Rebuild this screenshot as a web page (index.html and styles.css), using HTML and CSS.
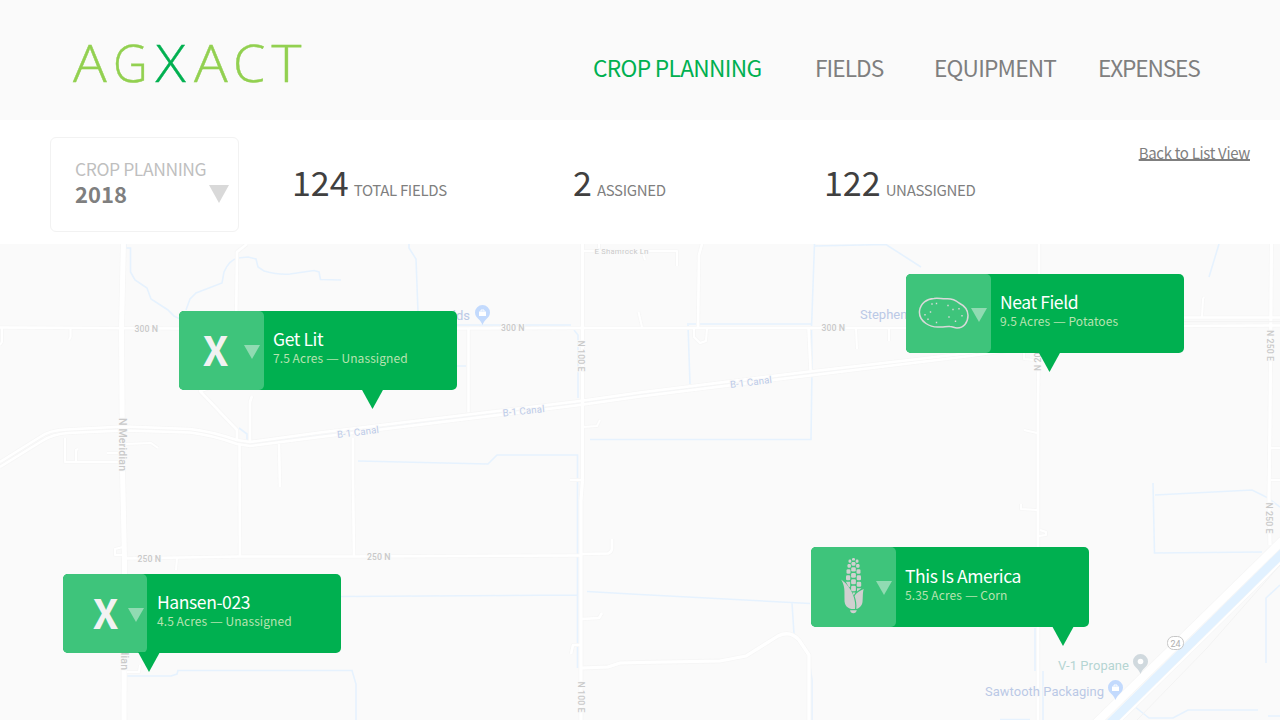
FILE: index.html
```html
<!DOCTYPE html>
<html lang="en">
<head>
<meta charset="utf-8">
<title>AGXACT – Crop Planning</title>
<link rel="stylesheet" href="styles.css">
</head>
<body>
<header class="header">
  <svg class="logo" viewBox="0 0 240 80" role="img" aria-label="AGXACT">
    <g class="logo-text">
      <text transform="translate(3 57) scale(1.1 1)">A</text>
      <text transform="translate(43 57) scale(.94 1)">G</text>
      <text class="logo-x" transform="translate(85.500 57) scale(1.1 1)">X</text>
      <text transform="translate(124 57) scale(1.1 1)">A</text>
      <text transform="translate(163 57) scale(1.02 1)">C</text>
      <text transform="translate(201.500 57) scale(1.12 1)">T</text>
    </g>
  </svg>
  <nav class="nav">
    <a class="nav-item nav-item-active nav-planning">CROP PLANNING</a>
    <a class="nav-item nav-fields">FIELDS</a>
    <a class="nav-item nav-equipment">EQUIPMENT</a>
    <a class="nav-item nav-expenses">EXPENSES</a>
  </nav>
</header>

<section class="summary">
  <div class="season">
    <div class="season-text">
      <span class="season-label">CROP PLANNING</span>
      <span class="season-year">2018</span>
    </div>
    <span class="season-arrow"></span>
  </div>
  <div class="stats">
    <div class="stat stat-total"><span class="stat-number">124</span><span class="stat-label">TOTAL FIELDS</span></div>
    <div class="stat stat-assigned"><span class="stat-number">2</span><span class="stat-label">ASSIGNED</span></div>
    <div class="stat stat-unassigned"><span class="stat-number">122</span><span class="stat-label">UNASSIGNED</span></div>
  </div>
  <a class="list-link">Back to List View</a>
</section>

<main class="map">
  <svg class="map-canvas" viewBox="0 244 1280 476">
    <defs>
      <g id="roads">
        <path class="w5" d="M123.500 240L121.500 328L122.500 470L124.500 560L124 725"/>
        <path class="w3" d="M582.500 240V480L581 500V725"/>
        <path class="w2" d="M1039 240V330L1038 400V725"/>
        <path class="w3" d="M1271.500 240L1270 420L1269 500L1270 545"/>
        <path class="w2" d="M0 327.500L180 328.500H460L580 328H910"/>
        <path class="w2" d="M124 558.500L240 556.500L350 556.500L582 555.500"/>
        <path class="w2" d="M0 462L40 437Q50 430 66 429.500L124 426.500L190 429Q210 431 237 440L250 442L320 432.500L580 401L640 392.500L810 371.500L970 353L1184 317.500H1280"/>
        <path class="w2" d="M0 467L42 441Q53 434 68 433L124 430.500L190 432.500Q212 435 237 444L250 446L320 437L580 405L640 396.500L810 375.500L970 356L1184 326L1280 325.500"/>
        <path class="w2" d="M247 244L237 252L236 328V380L200 391L237 430V441"/>
        <path class="w2" d="M252 396L250 402V441M239.500 444L240 556M279 444L280 487M353 438V480L354 556"/>
        <path class="w2" d="M468.500 328V412"/>
        <path class="w1" d="M2 328V342L0 345M70.500 328V337L69 340M65 438V462H122M76 461V450L78 449M107 453H119M125 444L151 443L158 448M177 558L176 570M123 547L115 549V555H122M127 672H139L140 665"/>
        <path class="w1" d="M583 251H677V266M599 244V251M642 250L645 260M638.500 312L642 327M583 427L597 426L600 420M570 480H582"/>
        <path class="w2" d="M702 244L699 255L698 328"/>
        <path class="w1" d="M694 328V337L700 343L706 341L707 328M856 328L857 349M889 328V341M1202 317L1203 299L1204 297M1024 353V359L1036 360M1024 430L1037 433"/>
        <path class="w2" d="M808.500 328L810.500 370"/>
        <path class="w2" d="M582 554L608 553.500Q612 552 612 548V539M582 619L599 618L602 613M582 645L573 645L571 654"/>
        <path class="w3" d="M582 668L608 667L620 663L640 662.500L720 661L746 656L778 636Q790 630 799 640L809 655V720"/>
        <path class="w1" d="M1021 504V509L1037 510M1040 530L1046 532V535L1039 536M1271 448H1280M1271 480H1280"/>
        <path class="w8" d="M1285 538L1094 725"/>
        <path class="w1" d="M1285 558.500L1116 725"/>
      </g>
      <g id="pin">
        <path d="M0 12C-2 6-7.500 5-7.500-.5A7.500 7.500 0 0 1 7.500-.5C7.500 5 2 6 0 12Z"/>
      </g>
    </defs>
    <g class="water">
      <path d="M126 244V248H130.500V272L135 280L147 288L151 299L168 310L174 316L180 319"/>
      <path d="M186 310L190 299L196 293L222 283L224 272Q229 260 238 258L248 257L256 259L258 267L264 271Q279 275 290 274L314 270.500L319 272L320.500 279.500L341 280"/>
      <path d="M239 428L247 434V440M409 244V248L416 259L418 312M457 325H571M574 330L578 335V398M457 366H466"/>
      <path d="M358 461L488 464L497 455H577.500V478M590 439.500H811L812 370L811.500 328L814.500 244M814.500 246L886 244.500L921 267M688 325L690 384M687 324H811"/>
      <path d="M577.500 482V668M341 596.500L577 595M587 591.500L640 594.500L810 603.500M792 603L794 634L808 652L812 680V720"/>
      <path d="M127 676H171L177 674L178 670.500H352L356 684V720"/>
      <path d="M1219 244L1209 277M1153 483L1154.500 553L1262 552M1155 495L1252 490L1268 498L1280 507M1280 585L1266 598V663M1035 628V671M1043 671V720M1134 706L1149 718H1173L1188 710H1258M1000 719.500H1030M1268 716H1280"/>
    </g>
    <path class="canal" d="M250 444L580 403L640 394.500L810 373.500L970 354.500"/>
    <use href="#roads" class="road-casing"/>
    <use href="#roads" class="road-fill"/>
    <path class="river" d="M1285 550.500L1108 725"/>
    <path class="rail" d="M1280 565L1207 648L1137 720M1184 321.700H1280"/>

    <g class="road-label">
      <text x="134.500" y="331.500" textLength="23.500">300 N</text>
      <text x="501" y="330.500" textLength="23.500">300 N</text>
      <text x="821.500" y="330.500" textLength="23.500">300 N</text>
      <text x="137.500" y="561.500" textLength="23.500">250 N</text>
      <text x="367" y="559.500" textLength="23.500">250 N</text>
      <text x="594.500" y="253.500" class="lane-label" textLength="54">E Shamrock Ln</text>
      <text transform="translate(119 418) rotate(90)" class="main-label" textLength="53">N Meridian</text>
      <text transform="translate(120.500 617) rotate(90)" class="main-label" textLength="53">N Meridian</text>
      <text transform="translate(578.300 340.500) rotate(90)" textLength="31">N 100 E</text>
      <text transform="translate(578.300 681.500) rotate(90)" textLength="31">N 100 E</text>
      <text transform="translate(1267 330) rotate(90)" textLength="31">N 250 E</text>
      <text transform="translate(1265.500 502.500) rotate(90)" textLength="31">N 250 E</text>
      <text transform="translate(1041 371) rotate(-90)" textLength="31">N 200 E</text>
    </g>
    <g class="canal-label">
      <text transform="translate(337.500 438) rotate(-7)" textLength="42">B-1 Canal</text>
      <text transform="translate(503 416.500) rotate(-6)" textLength="42">B-1 Canal</text>
      <text transform="translate(730.500 388) rotate(-7)" textLength="42">B-1 Canal</text>
    </g>
    <g class="place-label">
      <text x="470" y="319.500" text-anchor="end">Fields</text>
      <text x="860" y="318.500">Stephens</text>
      <text x="985" y="696" textLength="119">Sawtooth Packaging</text>
      <text x="1058" y="669.500" class="propane-label" textLength="71">V-1 Propane</text>
    </g>
    <g class="shop-pin">
      <use href="#pin" x="482.500" y="313"/>
      <use href="#pin" x="1115.500" y="688"/>
    </g>
    <g class="bag">
      <path d="M479 311.500h7v4.500h-7zM1112 686.500h7v4.500h-7z"/>
      <path class="bag-handle" d="M481 311.500v-1.500h3v1.500M1114 686.500v-1.500h3v1.500"/>
    </g>
    <g class="plain-pin"><use href="#pin" x="1140.500" y="662"/></g>
    <circle class="pin-hole" cx="1140.500" cy="661.500" r="2.800"/>
    <rect class="shield" x="1167.500" y="636.500" width="16" height="13" rx="6"/>
    <text class="shield-text" x="1175.500" y="646.500" text-anchor="middle">24</text>
  </svg>

  <article class="field field-get-lit">
    <div class="crop"><span class="crop-none">X</span><span class="crop-arrow"></span></div>
    <div class="field-body"><h2 class="field-name">Get Lit</h2><p class="field-info">7.5 Acres <span class="dash">—</span> Unassigned</p></div>
    <span class="pointer"></span>
  </article>

  <article class="field field-neat">
    <div class="crop">
      <svg class="potato" viewBox="0 0 52 34">
        <path class="potato-skin" d="M16 1.500C21 .8 24 2.200 29 1.800C34 1.700 38 3.500 41 6C46 8.500 50 12.500 50 18.500C50 25 46 31 39 31C36 31 35 29.500 32 29.500C28 29 26 30.300 22 29.900C17 30.300 12 29.300 8 26.500C3 23 1 19 1.500 14C2.500 6 9 1.800 16 1.500Z"/>
        <path class="potato-eyes" d="M13.300 7h1.400M17.800 6.500h1.400M29.300 8.500h1.400M34.300 12.500h1.400M40.300 11.700h1.400M11.800 15h1.400M6.300 17.800h1.400M9.300 22.300h1.400M17.800 25.500h1.400M30.300 20h1.400M43.300 18.700h1.400M36.800 24.300h1.400"/>
      </svg>
      <span class="crop-arrow"></span>
    </div>
    <div class="field-body"><h2 class="field-name">Neat Field</h2><p class="field-info">9.5 Acres <span class="dash">—</span> Potatoes</p></div>
    <span class="pointer"></span>
  </article>

  <article class="field field-hansen">
    <div class="crop"><span class="crop-none">X</span><span class="crop-arrow"></span></div>
    <div class="field-body"><h2 class="field-name">Hansen-023</h2><p class="field-info">4.5 Acres <span class="dash">—</span> Unassigned</p></div>
    <span class="pointer"></span>
  </article>

  <article class="field field-america">
    <div class="crop">
      <svg class="corn" viewBox="0 0 24 57">
        <rect x="11" y="1" width="3" height="2.600" rx="1.200"/>
        <rect x="7.500" y="2.600" width="2.800" height="3.200" rx="1.200"/><rect x="14.700" y="2.600" width="2.800" height="3.200" rx="1.200"/>
        <rect x="10.500" y="5" width="4" height="3.800" rx="1.200"/>
        <rect x="6.500" y="7" width="3.400" height="3.800" rx="1.200"/><rect x="15.100" y="7" width="3.400" height="3.800" rx="1.200"/>
        <rect x="10.200" y="10.300" width="4.600" height="4.200" rx="1.300"/>
        <rect x="5.500" y="12.200" width="4" height="4.500" rx="1.300"/><rect x="15.500" y="12.200" width="4" height="4.500" rx="1.300"/>
        <rect x="10.100" y="16" width="4.800" height="4.800" rx="1.300"/>
        <rect x="5" y="18.200" width="4.300" height="5" rx="1.300"/><rect x="15.700" y="18.200" width="4.300" height="5" rx="1.300"/>
        <rect x="10.100" y="22.300" width="4.800" height="5" rx="1.300"/>
        <path d="M4.800 24.700H9.200V29.500L8 30.500Z"/><rect x="15.700" y="24.700" width="4.500" height="5" rx="1.300"/>
        <rect x="10.100" y="28.800" width="4.800" height="5.500" rx="1.300"/>
        <path d="M16 31.200H20.500L16 34.500ZM11.500 35.500H14.500L12.700 38.500Z"/>
        <path d="M.2 22.500C6 27 9 31 11.700 37C14 43 14.700 48 14 52C7 52.500 3 49 3.500 42C3.500 34 4 29 .2 22.500Z"/>
        <path d="M22.700 32C21.500 36 22 42 21.500 45C21 49 18 51.500 15.300 52C15.800 47 15 43 13.500 39C15.500 35.500 18.500 34 22.700 32Z"/>
        <path d="M9 53.300H15.800Q15 56.300 12.400 56.300Q9.500 56.300 9 53.300Z"/>
      </svg>
      <span class="crop-arrow"></span>
    </div>
    <div class="field-body"><h2 class="field-name">This Is America</h2><p class="field-info">5.35 Acres <span class="dash">—</span> Corn</p></div>
    <span class="pointer"></span>
  </article>
</main>
</body>
</html>
```
FILE: styles.css
```css
* { box-sizing: border-box; }

body {
  margin: 0;
  width: 1280px;
  height: 720px;
  overflow: hidden;
  display: flex;
  flex-direction: column;
  background: #fff;
  font-family: "Noto Sans CJK SC", "Noto Sans", sans-serif;
}

/* Header */
.header {
  height: 120px;
  flex: none;
  display: flex;
  justify-content: space-between;
  align-items: flex-start;
  padding: 25px 80px 0 70px;
  background: #fafafa;
}
.logo { width: 240px; height: 80px; }
.logo-text { font-family: "Open Sans", sans-serif; font-size: 51px; font-weight: 300; fill: #92d050; stroke: #92d050; stroke-width: .4px; }
.logo-x { fill: #00b050; stroke: #00b050; }
.nav { display: flex; padding-top: 28px; }
.nav-item { font-size: 22.7px; line-height: 30px; letter-spacing: -.68px; color: #7f7f7f; white-space: nowrap; }
.nav-item-active { color: #00b050; }
.nav-planning { width: 222px; }
.nav-fields { width: 119px; letter-spacing: -.95px; }
.nav-equipment { width: 164px; letter-spacing: -.8px; }
.nav-expenses { width: 102px; letter-spacing: -1.15px; }

/* Summary bar */
.summary {
  height: 124px;
  flex: none;
  display: flex;
  align-items: flex-start;
  padding: 17px 30px 0 50px;
}
.season {
  width: 189px;
  height: 95px;
  display: flex;
  justify-content: space-between;
  padding: 18px 9px 0 24px;
  border: 1px solid #f2f2f2;
  border-radius: 6px;
}
.season-text { display: flex; flex-direction: column; white-space: nowrap; }
.season-label { font-size: 17.5px; line-height: 26px; letter-spacing: -.42px; color: #bfbfbf; }
.season-year { font-size: 22px; line-height: 22px; font-weight: 700; color: #7f7f7f; }
.season-arrow { width: 20px; height: 18px; margin-top: 29px; background: #d9d9d9; clip-path: polygon(0 0, 100% 0, 50% 100%); flex: none; }
.stats { display: flex; flex: 1; padding: 22px 0 0 53px; }
.stat { display: flex; align-items: baseline; white-space: nowrap; }
.stat-total { width: 281px; }
.stat-assigned { width: 251px; }
.stat-number { font-size: 34px; line-height: 46px; color: #404040; }
.stat-label { margin-left: 5px; font-size: 15px; line-height: 20px; letter-spacing: -.33px; color: #7f7f7f; }
.list-link { margin-top: 5px; font-size: 15px; line-height: 22px; letter-spacing: -.31px; color: #7f7f7f; text-decoration: underline; text-decoration-thickness: 1.5px; text-underline-offset: 0; text-decoration-skip-ink: none; white-space: nowrap; }

/* Map */
.map { position: relative; height: 476px; flex: none; overflow: hidden; background: #fafafa; }
.map-canvas { display: block; width: 1280px; height: 476px; font-family: Roboto, sans-serif; }
.water path { fill: none; stroke: #e6f2fe; stroke-width: 1.6; }
.canal { fill: none; stroke: #f0f5fb; stroke-width: 1.5; }
.river { stroke: #e1f1ff; stroke-width: 8.5; }
.rail { fill: none; stroke: #f3f3f3; stroke-width: 1; }
#roads path { fill: none; stroke-width: calc(var(--w) + var(--casing)); stroke-linejoin: round; }
.road-casing { --casing: 1.6px; stroke: #f6f6f6; }
.road-fill { --casing: 0px; stroke: #fff; }
.w1 { --w: 2px; }
.w2 { --w: 2.6px; }
.w3 { --w: 3.2px; }
.w5 { --w: 5px; }
.w8 { --w: 8px; }
.road-label text, .canal-label text, .place-label text { paint-order: stroke; stroke: #fafafa; stroke-width: 2px; }
.road-label text { font-size: 8.8px; fill: #c9c9c9; font-weight: 500; }
.road-label .lane-label { font-size: 8px; font-weight: 400; }
.road-label .main-label { font-size: 10.5px; }
.canal-label text { font-size: 9.8px; fill: #bccae8; }
.place-label text { font-size: 13px; fill: #bbc9e6; }
.place-label .propane-label { fill: #b5d5d3; }
.shop-pin { fill: #c3dafd; }
.plain-pin { fill: #d0d9de; }
.pin-hole, .bag { fill: #fff; }
.bag-handle { fill: none; stroke: #fff; }
.shield { fill: #fff; stroke: #c6c6c6; stroke-width: 1; }
.shield-text { font-size: 9px; fill: #b0b0b0; }

/* Field callouts */
.field {
  position: absolute;
  width: 278px;
  height: 79px;
  display: flex;
  background: #00b050;
  border-radius: 5px;
}
.field-get-lit { left: 179px; top: 67px; --tip: 182.5px; }
.field-neat { left: 906px; top: 30px; --tip: 132.5px; }
.field-hansen { left: 63px; top: 330px; --tip: 75px; }
.field-america { left: 811px; top: 303px; height: 80px; --tip: 241px; }
.crop { position: relative; width: 85px; flex: none; background: #3ec47b; border-radius: 5px; }
.field-hansen .crop { width: 84px; }
.crop-none {
  display: block;
  width: 73px;
  color: #f2f2f2;
  font-size: 41px;
  font-weight: 700;
  line-height: 74px;
  text-align: center;
}
.field-hansen .crop-none { width: 85px; }
.crop-arrow { position: absolute; left: 65px; top: 34px; width: 16px; height: 14px; background: #90dbb2; clip-path: polygon(0 0, 100% 0, 50% 100%); }
.potato { display: block; width: 52px; height: 34px; margin: 23px 0 0 12px; }
.potato-skin { fill: none; stroke: #d9d9d9; stroke-width: 1.5; }
.potato-eyes { stroke: #d9d9d9; stroke-width: 1.4; }
.corn { display: block; width: 24px; height: 57px; margin: 10px 0 0 30px; fill: #d0d0d0; }
.field-body { padding: 18px 0 0 9px; white-space: nowrap; }
.field-hansen .field-body { padding-left: 10px; }
.field-america .field-body { padding-top: 19px; }
.field-name { margin: 0; font-size: 17.5px; line-height: 20px; letter-spacing: -.4px; font-weight: 400; color: #fff; }
.field-info { margin: 0; font-size: 12px; line-height: 17px; letter-spacing: .07px; color: #b8e3b0; }
.dash { display: inline-block; transform: scaleX(1.2); margin: 0 1px; }
.pointer { position: absolute; left: var(--tip); top: calc(100% - 1px); width: 22px; height: 20px; background: #00b050; clip-path: polygon(0 0, 100% 0, 50% 100%); }
```
